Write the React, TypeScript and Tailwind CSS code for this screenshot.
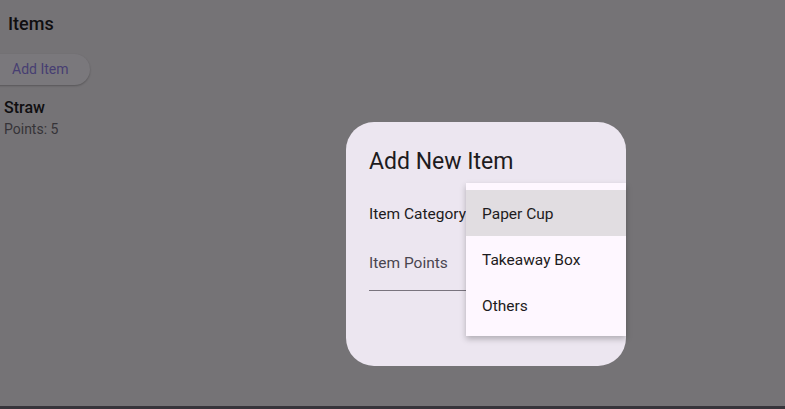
import React from "react";

export default function App() {
  return (
    <div
      className="relative w-[785px] h-[409px] overflow-hidden flex flex-col bg-[#757376]"
      style={{ fontFamily: "Roboto, 'Noto Sans', sans-serif" }}
    >
      <div className="flex-1 flex flex-col">
        <div className="h-[46px] flex items-center pl-2 text-[18px] font-medium text-[#0f0e10]">
          Items
        </div>
        <div className="flex mt-[8px]">
          <div className="ml-[-20px] h-[31px] w-[110px] rounded-full bg-[#7a787c] shadow-[0_1px_2px_rgba(0,0,0,0.25)] flex items-center pl-[32px] text-[14px] text-[#473e72]">
            Add Item
          </div>
        </div>
        <div className="mt-[12px] pl-[4px] flex flex-col">
          <div className="text-[16px] leading-[22px] font-medium text-[#0f0e10]">Straw</div>
          <div className="text-[14px] leading-[20px] text-[#353338]">Points: 5</div>
        </div>
      </div>
      <div className="h-[3px] bg-[#36343a]" />

      <div className="absolute left-[346px] top-[122px] w-[280px] h-[244px] rounded-[28px] bg-[#ece6f0] flex flex-col px-[23px] pt-[24px]">
        <div className="text-[23px] leading-[32px] text-[#1d1b20]">Add New Item</div>
        <div className="mt-[24px] text-[15.5px] leading-[24px] text-[#1d1b20]">Item Category</div>
        <div className="mt-[25px] text-[15.5px] leading-[24px] text-[#49454f]">Item Points</div>
        <div className="mt-[15px] h-px bg-[#79747e]" />
        <div className="absolute left-[120px] top-[61px] w-[160px] bg-[#fef7ff] pt-[7px] pb-[8px] shadow-[0_3px_6px_rgba(0,0,0,0.25)] flex flex-col">
          <div className="h-[46px] flex items-center pl-[16px] pt-[3px] bg-[#e1dde1] text-[15.5px] text-[#1d1b20]">Paper Cup</div>
          <div className="h-[46px] flex items-center pl-[16px] pt-[3px] text-[15.5px] text-[#1d1b20]">Takeaway Box</div>
          <div className="h-[46px] flex items-center pl-[16px] pt-[3px] text-[15.5px] text-[#1d1b20]">Others</div>
        </div>
      </div>
    </div>
  );
}
